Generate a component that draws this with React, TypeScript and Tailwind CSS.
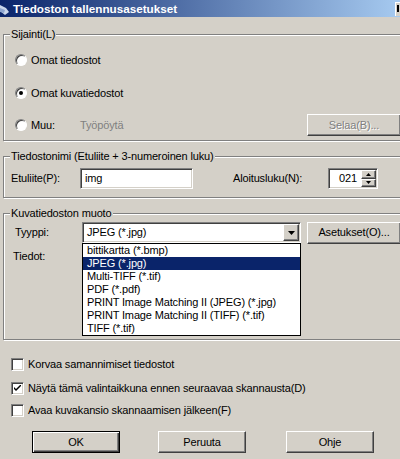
import type { ReactNode } from "react";

const raised =
  "border border-t-white border-l-white border-r-[#404040] border-b-[#404040] shadow-[inset_-1px_-1px_0_#808080]";
const sunken =
  "border border-t-[#808080] border-l-[#808080] border-b-white border-r-white shadow-[inset_1px_1px_0_#404040,inset_-1px_-1px_0_#d4d0c8]";

function Group({ label, className, children }: { label: string; className: string; children: ReactNode }) {
  return (
    <div className={`relative ml-[3px] w-[420px] border border-[#808080] shadow-[inset_1px_1px_0_#fff,1px_1px_0_#fff] ${className}`}>
      <span className="absolute left-[6px] top-[-8px] bg-[#d4d0c8] px-[1px] leading-[14px]">{label}</span>
      {children}
    </div>
  );
}

function Radio({ checked }: { checked?: boolean }) {
  return (
    <span className="flex h-[12px] w-[12px] shrink-0 items-center justify-center rounded-full border border-[#808080] border-b-white border-r-white bg-white shadow-[inset_1px_1px_0_#404040]">
      {checked && <span className="h-[4px] w-[4px] rounded-full bg-black" />}
    </span>
  );
}

function Check({ checked }: { checked?: boolean }) {
  return (
    <span className={`flex h-[13px] w-[13px] shrink-0 items-center justify-center bg-white ${sunken}`}>
      {checked && (
        <svg width="7" height="7" viewBox="0 0 7 7">
          <path d="M0 2 L0 4 L2 6 L7 1 L7 -1 L2 4 Z" fill="#000" />
        </svg>
      )}
    </span>
  );
}

function Button({ children, className = "", disabled }: { children: ReactNode; className?: string; disabled?: boolean }) {
  return (
    <div
      className={`flex h-[22px] shrink-0 items-center justify-center ${raised} ${
        disabled ? "text-[#808080] [text-shadow:1px_1px_0_#fff]" : ""
      } ${className}`}
    >
      {children}
    </div>
  );
}

const formats = [
  "bittikartta (*.bmp)",
  "JPEG (*.jpg)",
  "Multi-TIFF (*.tif)",
  "PDF (*.pdf)",
  "PRINT Image Matching II (JPEG) (*.jpg)",
  "PRINT Image Matching II (TIFF) (*.tif)",
  "TIFF (*.tif)",
];

export default function App() {
  return (
    <div className="h-[459px] w-[400px] overflow-hidden bg-[#d4d0c8] font-['Liberation_Sans',Arial,sans-serif] text-[11px] tracking-[-0.15px] text-black">
      {/* otsikkopalkki */}
      <div className="flex h-[17px] items-center overflow-hidden bg-[linear-gradient(to_right,#0a246a,#a6caf0)]">
        <svg width="10" height="14" viewBox="0 0 10 14" className="shrink-0">
          <path d="M0 3 L6 6 L9 10 L5 13 L0 9 Z" fill="#c9d6ec" />
          <path d="M0 6 L5 8 L4 11 L0 10 Z" fill="#8ea5cf" />
        </svg>
        <span className="ml-[3px] text-[11.7px] font-bold tracking-normal text-white">Tiedoston tallennusasetukset</span>
        <div className="ml-auto mr-[-11px] flex h-[14px] w-[16px] shrink-0 items-center bg-[#d4d0c8] pl-[2px] shadow-[inset_1px_1px_0_#fff]">
          <span className="h-[7px] w-[2px] bg-black" />
        </div>
      </div>

      <Group label="Sijainti(L)" className="mt-[17px] pl-[11px] pt-[15px] pb-[4px]">
        <div className="flex h-[20px] items-center gap-[4px]">
          <Radio />
          <span>Omat tiedostot</span>
        </div>
        <div className="mt-[13px] flex h-[20px] items-center gap-[4px]">
          <Radio checked />
          <span>Omat kuvatiedostot</span>
        </div>
        <div className="mt-[11px] flex h-[22px] items-center">
          <div className="flex w-[65px] items-center gap-[4px]">
            <Radio />
            <span>Muu:</span>
          </div>
          <span className="w-[227px] text-[#808080]">Työpöytä</span>
          <Button disabled className="w-[94px]">Selaa(B)...</Button>
        </div>
      </Group>

      <Group label="Tiedostonimi (Etuliite + 3-numeroinen luku)" className="mt-[15px] pl-[7px] pt-[11px] pb-[8px]">
        <div className="flex h-[21px] items-center">
          <span className="w-[69px]">Etuliite(P):</span>
          <div className={`flex h-[21px] w-[113px] items-center bg-white pl-[4px] ${sunken}`}>img</div>
          <span className="ml-[40px] w-[95px]">Aloitusluku(N):</span>
          <div className={`flex h-[21px] w-[50px] items-center bg-white pr-[1px] ${sunken}`}>
            <span className="flex-1 pr-[4px] text-right">021</span>
            <div className="flex h-[17px] w-[15px] flex-col">
              <div className={`flex flex-1 items-center justify-center bg-[#d4d0c8] ${raised}`}>
                <svg width="5" height="3" viewBox="0 0 5 3"><path d="M2.5 0 L5 3 L0 3 Z" fill="#000" /></svg>
              </div>
              <div className={`flex flex-1 items-center justify-center bg-[#d4d0c8] ${raised}`}>
                <svg width="5" height="3" viewBox="0 0 5 3"><path d="M0 0 L5 0 L2.5 3 Z" fill="#000" /></svg>
              </div>
            </div>
          </div>
        </div>
      </Group>

      <Group label="Kuvatiedoston muoto" className="mt-[15px] h-[127px] pl-[11px] pt-[8px]">
        <div className="flex h-[21px] items-center">
          <span className="w-[67px]">Tyyppi:</span>
          <div className={`flex h-[21px] w-[219px] items-center bg-white pl-[4px] pr-[1px] ${sunken}`}>
            <span className="flex-1">JPEG (*.jpg)</span>
            <div className={`flex h-[17px] w-[16px] items-center justify-center bg-[#d4d0c8] ${raised}`}>
              <svg width="7" height="4" viewBox="0 0 7 4"><path d="M0 0 L7 0 L3.5 4 Z" fill="#000" /></svg>
            </div>
          </div>
          <Button className="ml-[6px] w-[94px]">Asetukset(O)...</Button>
        </div>
        <div className="ml-[-2px] mt-[6px] leading-[14px]">Tiedot:</div>

        <div className="absolute left-[78px] top-[29px] w-[219px] border border-black bg-white">
          {formats.map((f, i) => (
            <div
              key={f}
              className={`h-[13px] pl-[4px] leading-[13px] ${i === 1 ? "bg-[#0a246a] text-white" : ""}`}
            >
              {f}
            </div>
          ))}
        </div>
      </Group>

      <div className="ml-[11px] mt-[16px] flex flex-col">
        <div className="flex h-[16px] items-center gap-[4px]">
          <Check />
          <span>Korvaa samannimiset tiedostot</span>
        </div>
        <div className="mt-[8px] flex h-[16px] items-center gap-[4px]">
          <Check checked />
          <span>Näytä tämä valintaikkuna ennen seuraavaa skannausta(D)</span>
        </div>
        <div className="mt-[6px] flex h-[16px] items-center gap-[4px]">
          <Check />
          <span>Avaa kuvakansio skannaamisen jälkeen(F)</span>
        </div>
      </div>

      <div className="mt-[13px] flex pl-[32px]">
        <div className="flex h-[22px] w-[88px] items-center justify-center border border-black shadow-[inset_1px_1px_0_#fff,inset_-1px_-1px_0_#404040,inset_-2px_-2px_0_#808080]">
          OK
        </div>
        <Button className="ml-[38px] w-[88px]">Peruuta</Button>
        <Button className="ml-[40px] w-[88px]">Ohje</Button>
      </div>
    </div>
  );
}
